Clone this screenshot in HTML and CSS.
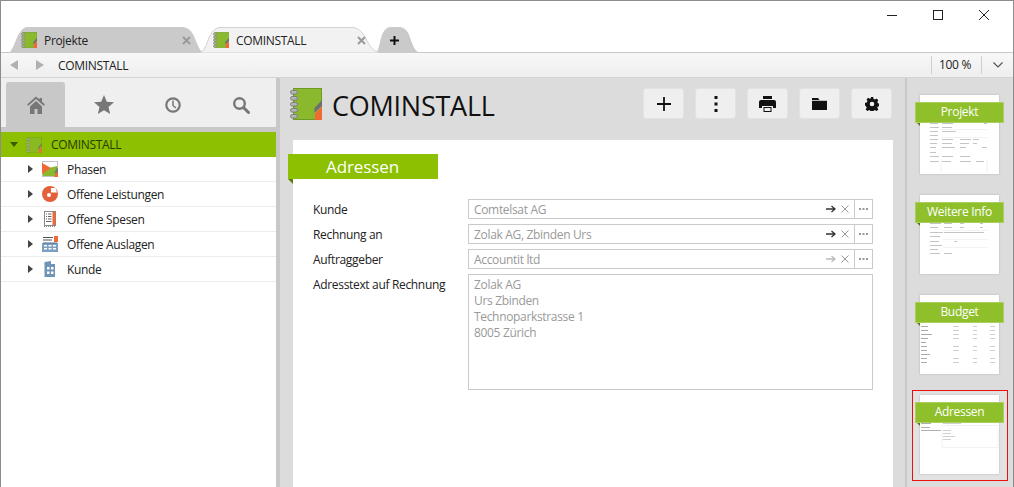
FILE: index.html
```html
<!DOCTYPE html>
<html lang="de">
<head>
<meta charset="utf-8">
<title>COMINSTALL</title>
<link rel="stylesheet" href="styles.css">
</head>
<body>
<svg class="defs" width="0" height="0" aria-hidden="true">
  <defs>
    <symbol id="book" viewBox="0 0 32 32">
      <rect x="3.5" y=".5" width="28" height="31" fill="#8ab92d" stroke="#6d9a20"/>
      <path d="M25 32V21l7-7v18z" fill="#fff" opacity=".15"/>
      <path d="M24.500 25V20L32 12v6z" fill="#6f6f6f"/>
      <path d="M25 25.500l7-7V32h-7z" fill="#ef6a35"/>
      <g fill="#b4b4b4" stroke="#7d7d7d" stroke-width="1">
        <rect x=".5" y="2.500" width="7" height="3.600" rx="1.800"/>
        <rect x=".5" y="8.500" width="7" height="3.600" rx="1.800"/>
        <rect x=".5" y="14.500" width="7" height="3.600" rx="1.800"/>
        <rect x=".5" y="20.500" width="7" height="3.600" rx="1.800"/>
        <rect x=".5" y="26.500" width="7" height="3.600" rx="1.800"/>
      </g>
    </symbol>
    <symbol id="tabx" viewBox="0 0 9 9">
      <path d="M1 1l7 7M8 1L1 8" stroke="#9a9a9a" stroke-width="2"/>
    </symbol>
  </defs>
</svg>
<div class="window">
  <header class="titlebar">
    <div class="winctl">
      <svg class="wc" width="12" height="12" viewBox="0 0 12 12"><path d="M1 6.500h10" stroke="#222"/></svg>
      <svg class="wc" width="12" height="12" viewBox="0 0 12 12"><rect x="1.500" y="1.500" width="9" height="9" fill="none" stroke="#222"/></svg>
      <svg class="wc" width="12" height="12" viewBox="0 0 12 12"><path d="M1 1l10 10M11 1L1 11" stroke="#222"/></svg>
    </div>
    <div class="tabs">
      <div class="tab tab-a">
        <svg class="tabshape" viewBox="0 0 196 26" preserveAspectRatio="none"><path d="M0 26C7 24 8 2 19 0H175C189 2 187 22 196 26z" fill="#cacaca"/></svg>
        <svg class="tabicon" width="16" height="16"><use href="#book"/></svg>
        <span class="tabtext">Projekte</span>
        <svg class="tabclose" width="9" height="9"><use href="#tabx"/></svg>
      </div>
      <div class="tab tab-b">
        <svg class="tabshape" viewBox="0 0 179 26" preserveAspectRatio="none"><path d="M0 25.500C8 24 7 3 19 .5H154C167 3 166 23 179 25.500V26H0z" fill="#f2f2f2" stroke="#d2d2d2"/></svg>
        <svg class="tabicon" width="16" height="16"><use href="#book"/></svg>
        <span class="tabtext">COMINSTALL</span>
        <svg class="tabclose" width="9" height="9"><use href="#tabx"/></svg>
      </div>
      <div class="tab tab-n">
        <svg class="tabshape" viewBox="0 0 44 26" preserveAspectRatio="none"><path d="M0 26C5 22 3 2 14 0H24C37 2 33 22 44 26z" fill="#cacaca"/></svg>
        <svg class="newplus" width="9" height="9" viewBox="0 0 9 9"><path d="M4.500 0v9M0 4.500h9" stroke="#111" stroke-width="2"/></svg>
      </div>
    </div>
  </header>

  <div class="addrbar">
    <svg class="nav" width="8" height="10" viewBox="0 0 8 10"><path d="M8 0v10L0 5z" fill="#b0b0b0"/></svg>
    <svg class="nav nav-f" width="8" height="10" viewBox="0 0 8 10"><path d="M0 0v10l8-5z" fill="#b0b0b0"/></svg>
    <span class="crumb">COMINSTALL</span>
    <span class="zoomval">100 %</span>
    <span class="zoomdd"><svg width="10" height="6" viewBox="0 0 10 6"><path d="M.5.500L5 5 9.500.5" fill="none" stroke="#555" stroke-width="1.200"/></svg></span>
  </div>

  <div class="body">
    <aside class="sidebar">
      <nav class="sidetabs">
        <div class="sidetab active"><svg width="20" height="20" viewBox="0 0 20 20"><path d="M10 1.500L1 9.500l1.200 1.300L10 4l7.800 6.800L19 9.500l-3-2.700V3h-2.500v1.600zM4 11.500V19h4.500v-5h3v5H16v-7.500L10 6z" fill="#777"/></svg></div>
        <div class="sidetab"><svg width="20" height="20" viewBox="0 0 20 20"><path d="M10 0l2.800 6.800 7.200.5-5.500 4.700 1.700 7.100L10 15.200l-6.200 3.900 1.700-7.100L0 7.300l7.200-.5z" fill="#777"/></svg></div>
        <div class="sidetab"><svg width="18" height="18" viewBox="0 0 18 18"><circle cx="9" cy="9" r="6.700" fill="none" stroke="#777" stroke-width="2.200"/><path d="M9 4.500V9.500l3 2.500" fill="none" stroke="#777" stroke-width="1.500"/></svg></div>
        <div class="sidetab"><svg width="18" height="18" viewBox="0 0 18 18"><circle cx="7.500" cy="7.500" r="5.300" fill="none" stroke="#777" stroke-width="2.400"/><path d="M11.500 11.500l5 5" stroke="#777" stroke-width="3" stroke-linecap="round"/></svg></div>
      </nav>
      <ul class="tree">
        <li class="node root">
          <svg class="tw" width="8" height="5" viewBox="0 0 8 5"><path d="M0 0h8L4 5z" fill="#3d5a00"/></svg>
          <svg class="nodeicon" width="16" height="16"><use href="#book"/></svg>
          <span>COMINSTALL</span>
        </li>
        <li class="node child">
          <svg class="tw" width="5" height="8" viewBox="0 0 5 8"><path d="M0 0v8l5-4z" fill="#444"/></svg>
          <svg class="nodeicon" width="16" height="16" viewBox="0 0 16 16"><rect width="16" height="16" fill="#c4c4c4"/><rect x="1" y="1" width="14" height="14" fill="#fff"/><path d="M1 15V8.500L15 5v10z" fill="#8ab92d"/><path d="M0 2l9 5-9 6z" fill="#ef6a35"/><path d="M12 16l4-7v7z" fill="#ef6a35"/><path d="M12.500 11l3.500-5v4l-2.500 3z" fill="#777"/></svg>
          <span>Phasen</span>
        </li>
        <li class="node child">
          <svg class="tw" width="5" height="8" viewBox="0 0 5 8"><path d="M0 0v8l5-4z" fill="#444"/></svg>
          <svg class="nodeicon" width="16" height="16" viewBox="0 0 16 16"><circle cx="8" cy="8" r="8" fill="#e2613a"/><path d="M9 2h4.500L15 6.500H9z" fill="#fff"/><circle cx="7" cy="9" r="2" fill="#fff"/></svg>
          <span>Offene Leistungen</span>
        </li>
        <li class="node child">
          <svg class="tw" width="5" height="8" viewBox="0 0 5 8"><path d="M0 0v8l5-4z" fill="#444"/></svg>
          <svg class="nodeicon" width="16" height="16" viewBox="0 0 16 16"><rect x="2.500" y=".5" width="11" height="14" fill="#fff" stroke="#888"/><path d="M2 15.500h12" stroke="#888" stroke-dasharray="1 1"/><path d="M4 3h1M6 3h3.500M4 5.500h1M6 5.500h3.500M4 8h1M6 8h3.500M4 10.500h5.500" stroke="#666"/><rect x="10.500" y="1" width="3" height="13" fill="#ef6a35"/></svg>
          <span>Offene Spesen</span>
        </li>
        <li class="node child">
          <svg class="tw" width="5" height="8" viewBox="0 0 5 8"><path d="M0 0v8l5-4z" fill="#444"/></svg>
          <svg class="nodeicon" width="16" height="16" viewBox="0 0 16 16"><rect width="16" height="16" fill="#7d9fc0"/><rect x="0" y="0" width="16" height="7" fill="#fff"/><path d="M1 1.500h10M1 4h9" stroke="#555" stroke-width="1.200"/><rect x="12" width="4" height="6" fill="#ef6a35"/><path d="M1 7h14" stroke="#4b6f94"/><path d="M2 9h3v1.500H2zM6.500 9h3v1.500h-3zM11 9h3v1.500h-3zM2 12h3v1.500H2zM6.500 12h3v1.500h-3zM11 12h3v1.500h-3z" fill="#fff"/></svg>
          <span>Offene Auslagen</span>
        </li>
        <li class="node child">
          <svg class="tw" width="5" height="8" viewBox="0 0 5 8"><path d="M0 0v8l5-4z" fill="#444"/></svg>
          <svg class="nodeicon" width="16" height="16" viewBox="0 0 16 16"><path d="M2.500 1L9 0v3h4v13H2.500z" fill="#6f94b6"/><path d="M5 6h2.500v2.500H5zM9 6h2.500v2.500H9zM5 10.500h2.500V13H5zM9 10.500h2.500V13H9z" fill="#fff"/></svg>
          <span>Kunde</span>
        </li>
      </ul>
    </aside>

    <main class="content">
      <div class="pagehead">
        <svg class="bigicon" width="32" height="32"><use href="#book"/></svg>
        <h1 class="pagetitle">COMINSTALL</h1>
        <div class="actions">
          <button class="act" type="button"><svg width="16" height="16" viewBox="0 0 16 16"><path d="M8 1v14M1 8h14" stroke="#111" stroke-width="1.800"/></svg></button>
          <button class="act" type="button"><svg width="4" height="16" viewBox="0 0 4 16"><path d="M.5 0h3v3h-3zM.5 6.500h3v3h-3zM.5 13h3v3h-3z" fill="#111"/></svg></button>
          <button class="act" type="button"><svg width="17" height="16" viewBox="0 0 17 16"><path d="M4 0h9v3H4zM2 4h13a2 2 0 0 1 2 2v6h-3v-2H3v2H0V6a2 2 0 0 1 2-2zM4.500 11h8v5h-8z" fill="#111"/><path d="M5.500 12h6v3h-6z" fill="#eee"/></svg></button>
          <button class="act" type="button"><svg width="15" height="12" viewBox="0 0 15 12"><path d="M0 0h6l1.500 2H15v10H0z" fill="#111"/><path d="M0 2.500h15" stroke="#eee" stroke-width=".8"/></svg></button>
          <button class="act" type="button"><svg width="14" height="14" viewBox="0 0 14 14"><path fill-rule="evenodd" d="M5.800 0h2.400l.4 1.900 1.300.6 1.700-1 1.700 1.700-1 1.700.6 1.300 1.900.4v2.400l-1.900.4-.6 1.300 1 1.700-1.700 1.700-1.700-1-1.300.6-.4 1.900H5.800l-.4-1.900-1.300-.6-1.700 1-1.700-1.700 1-1.700-.6-1.300L0 8.200V5.800l1.900-.4.6-1.300-1-1.700 1.700-1.700 1.700 1 1.300-.6zM7 4.700a2.300 2.300 0 1 0 0 4.600 2.300 2.300 0 0 0 0-4.600z" fill="#111"/></svg></button>
        </div>
      </div>
      <section class="card">
        <div class="ribbon"><span>Adressen</span></div>
        <form class="form">
          <label class="lbl">Kunde</label>
          <div class="field">
            <span class="val">Comtelsat AG</span>
            <svg class="go" width="10" height="8" viewBox="0 0 10 8"><path d="M0 4h8M5.500 1L9 4 5.500 7" fill="none" stroke="#333" stroke-width="1.300"/></svg>
            <svg class="clr" width="8" height="8" viewBox="0 0 8 8"><path d="M.5.500l7 7M7.500.5l-7 7" stroke="#999"/></svg>
            <span class="more"><svg width="9" height="2" viewBox="0 0 9 2"><path d="M0 0h2v2H0zM3.500 0h2v2h-2zM7 0h2v2H7z" fill="#999"/></svg></span>
          </div>
          <label class="lbl">Rechnung an</label>
          <div class="field">
            <span class="val">Zolak AG, Zbinden Urs</span>
            <svg class="go" width="10" height="8" viewBox="0 0 10 8"><path d="M0 4h8M5.500 1L9 4 5.500 7" fill="none" stroke="#333" stroke-width="1.300"/></svg>
            <svg class="clr" width="8" height="8" viewBox="0 0 8 8"><path d="M.5.500l7 7M7.500.5l-7 7" stroke="#999"/></svg>
            <span class="more"><svg width="9" height="2" viewBox="0 0 9 2"><path d="M0 0h2v2H0zM3.500 0h2v2h-2zM7 0h2v2H7z" fill="#999"/></svg></span>
          </div>
          <label class="lbl">Auftraggeber</label>
          <div class="field">
            <span class="val">Accountit ltd</span>
            <svg class="go" width="10" height="8" viewBox="0 0 10 8"><path d="M0 4h8M5.500 1L9 4 5.500 7" fill="none" stroke="#bbb" stroke-width="1.300"/></svg>
            <svg class="clr" width="8" height="8" viewBox="0 0 8 8"><path d="M.5.500l7 7M7.500.5l-7 7" stroke="#999"/></svg>
            <span class="more"><svg width="9" height="2" viewBox="0 0 9 2"><path d="M0 0h2v2H0zM3.500 0h2v2h-2zM7 0h2v2H7z" fill="#999"/></svg></span>
          </div>
          <label class="lbl">Adresstext auf Rechnung</label>
          <div class="area">Zolak AG<br>Urs Zbinden<br>Technoparkstrasse 1<br>8005 Zürich</div>
        </form>
      </section>
    </main>

    <aside class="thumbs">
      <div class="thumb">
        <div class="page"><svg width="79" height="79" viewBox="0 0 79 79"><path d="M10 28.500h8M22 28.500h11M64 28.500h3M10 32.500h9M22 32.500h10M10 36.500h8M22 36.500h14M10 40.500h8M10 44.500h8M22 44.500h11M40 44.500h11M53 44.500h6M10 48.500h7M22 48.500h10M40 48.500h9M53 48.500h4M10 52.500h6M22 52.500h13M40 52.500h6M62 52.500h5M10 57.500h6M10 61.500h9M22 61.500h11M40 61.500h10M10 66.500h9M22 66.500h9M40 66.500h11M56 66.500h8" stroke="#c4c4c4"/><path d="M21 27.500h46M21 34.500h46M21 42.500h46M21 64.500V78M67 64V78" stroke="#f2f2f2"/></svg></div>
        <div class="tribbon">Projekt</div>
      </div>
      <div class="thumb">
        <div class="page"><svg width="79" height="79" viewBox="0 0 79 79"><path d="M10 28.500h11M24 28.500h8M40 28.500h4M60 28.500h3M10 32.500h8M24 32.500h8M40 32.500h4M60 32.500h3M10 37.500h13M24 37.500h40M10 41.500h10M10 46.500h9M34 46.500h3M10 50.500h12M10 54.500h8M10 58.500h10M24 58.500h8" stroke="#c4c4c4"/><path d="M23 35.500h44M23 44.500h44M23 52.500h44" stroke="#f2f2f2"/></svg></div>
        <div class="tribbon">Weitere Info</div>
      </div>
      <div class="thumb">
        <div class="page"><svg width="79" height="79" viewBox="0 0 79 79"><path d="M1 27.500h9M1 31.500h7M1 35.500h7M1 39.500h11M1 43.500h7M1 47.500h5M1 51.500h6M1 55.500h6M1 59.500h9M1 63.500h6M1 67.500h6" stroke="#aaa"/><path d="M33 31.500h6M53 31.500h4M70 31.500h5M33 35.500h6M53 35.500h4M70 35.500h5M33 39.500h6M53 39.500h4M70 39.500h5M33 43.500h6M53 43.500h4M70 43.500h5M33 51.500h6M53 51.500h4M70 51.500h5M33 55.500h6M53 55.500h4M70 55.500h5M33 63.500h6M53 63.500h4M70 63.500h5M33 67.500h6M53 67.500h4M70 67.500h5" stroke="#d0d0d0"/></svg></div>
        <div class="tribbon">Budget</div>
      </div>
      <div class="thumb current">
        <div class="page"><svg width="79" height="79" viewBox="0 0 79 79"><path d="M1 28.500h10M1 32.500h9M1 35.500h20" stroke="#b0b0b0"/><path d="M23 28.500h18M23 35.500h8M23 38.500h8M23 41.500h12M23 44.500h8" stroke="#d0d0d0"/><path d="M22 26.500h56M22 30.500h56M22 34.500V52.500H78V34.500" stroke="#f2f2f2" fill="none"/></svg></div>
        <div class="tribbon">Adressen</div>
      </div>
    </aside>
  </div>
</div>
</body>
</html>
```
FILE: styles.css
```css
* { box-sizing: border-box; }
html, body { margin: 0; padding: 0; }
body {
  width: 1014px;
  height: 487px;
  overflow: hidden;
  font-family: "Open Sans", "Noto Sans", sans-serif;
  font-size: 12px;
  letter-spacing: -.33px;
  color: #222;
  background: #fff;
}
.defs { display: block; height: 0; }
.window {
  width: 1014px;
  height: 487px;
  display: flex;
  flex-direction: column;
  border: 1px solid #8c8c8c;
  border-bottom: 0;
  overflow: hidden;
}

/* title bar and tabs */
.titlebar {
  height: 52px;
  flex: none;
  border-bottom: 1px solid #c8c8c8;
  display: flex;
  flex-direction: column;
}
.winctl {
  height: 26px;
  flex: none;
  display: flex;
  justify-content: flex-end;
  align-items: flex-start;
  padding: 8px 23px 0 0;
  gap: 34px;
}
.wc { display: block; }
.tabs {
  height: 26px;
  flex: none;
  display: flex;
  padding-left: 7px;
  position: relative;
}
.tab {
  position: relative;
  height: 26px;
  display: flex;
  align-items: center;
  padding-left: 13px;
  flex: none;
}
.tabshape {
  position: absolute;
  left: 0;
  top: 0;
  width: 100%;
  height: 100%;
}
.tab > :not(.tabshape) { position: relative; }
.tab-a { width: 196px; }
.tab-b { width: 179px; margin-left: -4px; z-index: 2; }
.tab-n { width: 44px; margin-left: -3px; padding-left: 14px; }
.tabicon { flex: none; margin-right: 7px; }
.tabtext { color: #222; }
.tabclose {
  flex: none;
  margin-left: auto;
  margin-right: 13px;
}
.newplus { flex: none; }

/* address bar */
.addrbar {
  height: 25px;
  flex: none;
  display: flex;
  align-items: center;
  padding-left: 9px;
  background: linear-gradient(#f8f8f8, #eeeeee);
  border-bottom: 1px solid #d4d4d4;
}
.nav { flex: none; }
.nav-f { margin-left: 18px; }
.crumb { margin-left: 14px; }
.zoomval {
  margin-left: auto;
  height: 18px;
  width: 51px;
  line-height: 18px;
  padding-left: 7px;
  border-left: 1px solid #cfcfcf;
  border-right: 1px solid #cfcfcf;
}
.zoomdd {
  width: 31px;
  display: flex;
  justify-content: center;
}

/* body */
.body {
  flex: 1;
  min-height: 0;
  display: flex;
}
.sidebar {
  width: 279px;
  flex: none;
  display: flex;
  flex-direction: column;
  background: #fff;
  border-right: 4px solid #c8c8c8;
}
.sidetabs {
  height: 54px;
  flex: none;
  display: flex;
  gap: 9.500px;
  padding: 4px 0 0 5px;
  background: #efefef;
  border-bottom: 5px solid #c8c8c8;
}
.sidetab {
  width: 59px;
  display: flex;
  align-items: center;
  justify-content: center;
  border-radius: 3px 3px 0 0;
}
.sidetab.active { background: #c8c8c8; }
.tree {
  list-style: none;
  margin: 0;
  padding: 0;
}
.node {
  height: 25px;
  display: flex;
  align-items: center;
  border-bottom: 1px solid #ececec;
  line-height: 25px;
}
.root {
  background: #8cc000;
  border-bottom: 0;
  padding-left: 9px;
  color: #2b3a00;
}
.root .tw { margin-right: 8px; }
.root .nodeicon { margin-right: 9px; opacity: .75; }
.child { padding-left: 27px; }
.child .tw { margin-right: 9px; }
.child .nodeicon { margin-right: 9px; }

/* content */
.content {
  width: 625px;
  flex: none;
  background: #dcdcdc;
  padding-left: 10px;
}
.pagehead {
  height: 62px;
  display: flex;
  align-items: flex-start;
  padding-top: 10px;
}
.bigicon { flex: none; margin-right: 10px; }
.pagetitle {
  margin: 0;
  font-size: 27px;
  font-weight: 400;
  line-height: 36px;
  letter-spacing: -.25px;
  color: #111;
}
.actions {
  margin-left: auto;
  margin-right: 13px;
  display: flex;
  gap: 11px;
}
.act {
  width: 41px;
  height: 31px;
  padding: 0;
  display: flex;
  align-items: center;
  justify-content: center;
  background: #efefef;
  border: 1px solid #e2e2e2;
  border-radius: 3px;
}
.card {
  position: relative;
  width: 600px;
  height: 347px;
  margin-left: 3px;
  background: #fff;
  padding-top: 14px;
}
.ribbon {
  position: relative;
  width: 150px;
  height: 25px;
  margin-left: -5px;
  background: #8cc000;
  color: #fff;
  font-size: 17px;
  letter-spacing: -.1px;
  line-height: 25px;
  padding-left: 38px;
}
.ribbon::after {
  content: "";
  position: absolute;
  left: 0;
  top: 25px;
  border-top: 5px solid #5c7d0a;
  border-left: 5px solid transparent;
}
.form {
  display: grid;
  grid-template-columns: 155px 405px;
  grid-auto-rows: 20px;
  row-gap: 5px;
  padding: 20px 0 0 20px;
}
.lbl { line-height: 22px; color: #222; }
.field {
  display: flex;
  align-items: center;
  padding-left: 5px;
  border: 1px solid #cacaca;
  background: #fff;
}
.val { color: #999; flex: 1; }
.go { flex: none; margin-right: 5px; }
.clr { flex: none; margin-right: 5px; }
.more {
  flex: none;
  width: 18px;
  height: 18px;
  display: flex;
  align-items: center;
  justify-content: center;
  border-left: 1px solid #cacaca;
}
.area {
  grid-row: span 5;
  height: 116px;
  border: 1px solid #cacaca;
  padding: 2px 5px;
  line-height: 16px;
  color: #999;
}

/* thumbnails */
.thumbs {
  flex: 1;
  min-width: 0;
  background: #dcdcdc;
  border-left: 2px solid #c8c8c8;
  padding: 12px 0 0 5px;
  display: flex;
  flex-direction: column;
  gap: 9px;
}
.thumb {
  position: relative;
  width: 96px;
  height: 91px;
  flex: none;
  padding: 4px 7px;
  border: 1px solid transparent;
}
.thumb.current {
  border-color: #e81010;
  background: #e2e2e2;
}
.page {
  width: 79px;
  height: 79px;
  background: #fff;
  box-shadow: 0 0 2px rgba(0, 0, 0, .2);
}
.page svg { display: block; }
.tribbon {
  position: absolute;
  left: 2px;
  top: 11px;
  width: 89px;
  height: 21px;
  background: #8fbf2b;
  border: 1px solid #a9cf5d;
  color: #fff;
  text-align: center;
  line-height: 18px;
  letter-spacing: -.3px;
}
.tribbon::after {
  content: "";
  position: absolute;
  left: 1px;
  top: 20px;
  border-top: 3px solid #55761a;
  border-left: 3px solid transparent;
}
```
